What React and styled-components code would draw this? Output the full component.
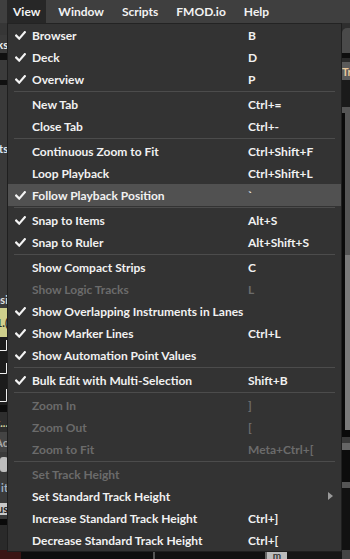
import React from 'react';
import styled, { createGlobalStyle } from 'styled-components';

const GlobalStyle = createGlobalStyle`
  html, body { margin: 0; padding: 0; background: #2a2a2a; }
  body { font-family: "Lato", "Noto Sans", sans-serif; }
`;

const Page = styled.div`
  position: relative;
  width: 350px;
  height: 559px;
  overflow: hidden;
  display: flex;
  flex-direction: column;
  background: #2c2c2c;
`;

const MenuBar = styled.div`
  height: 23px;
  flex: none;
  display: flex;
  padding-left: 7px;
  background: #3f3f3f;
`;

const BarItem = styled.div`
  display: flex;
  align-items: center;
  padding: 0 6px;
  margin-right: 6px;
  font-size: 12px;
  font-weight: 700;
  color: #f2f2f2;
  background: ${(p) => (p.$active ? '#272727' : 'transparent')};
`;

const Body = styled.div`
  flex: 1;
  display: flex;
  min-height: 0;
`;

const Sliver = styled.div`
  width: 8px;
  flex: none;
  display: flex;
  flex-direction: column;
  overflow: hidden;
`;

const Block = styled.div`
  height: ${(p) => p.$h}px;
  flex: none;
  background: ${(p) => p.$bg};
  color: ${(p) => p.$fg || '#eee'};
  display: flex;
  align-items: center;
  justify-content: ${(p) => (p.$right ? 'flex-start' : 'flex-end')};
  overflow: hidden;
  white-space: nowrap;
  font-size: 11px;
  font-weight: 700;
  border-top-left-radius: ${(p) => (p.$round ? '5px' : '0')};
`;

const SplitBlock = styled.div`
  height: ${(p) => p.$h}px;
  flex: none;
  display: grid;
  grid-template-columns: 3px 1fr;
  background: ${(p) => p.$bg};
  &::before {
    content: '';
    background: #0a0a0a;
  }
`;

const Chip = styled.div`
  height: ${(p) => p.$h}px;
  width: 100%;
  background: ${(p) => p.$bg};
  border-radius: ${(p) => p.$r || 0}px;
  color: #222;
  display: flex;
  align-items: center;
  justify-content: flex-end;
  font-size: 11px;
  font-weight: 700;
  overflow: hidden;
`;

const Middle = styled.div`
  flex: 1;
  display: flex;
  flex-direction: column;
`;

const Filler = styled.div`
  flex: 1;
  background: #2c2c2c;
`;

const BottomStrip = styled.div`
  height: 8px;
  display: flex;
  background: #111;
`;

const Seg = styled.div`
  width: ${(p) => p.$w}px;
  flex: none;
  background: ${(p) => p.$bg};
  color: #333;
  font-size: 10px;
  font-weight: 700;
  line-height: 8px;
  overflow: hidden;
  text-align: center;
`;

const Menu = styled.div`
  position: absolute;
  top: 23px;
  left: 7px;
  width: 335px;
  box-sizing: border-box;
  background: #333333;
  border: 1px solid #1f1f1f;
  border-top-color: #232323;
  display: flex;
  flex-direction: column;
`;

const Row = styled.div`
  height: 22px;
  display: grid;
  grid-template-columns: 24px 216px 1fr;
  align-items: center;
  background: ${(p) => (p.$hl ? '#515151' : 'transparent')};
  color: ${(p) => (p.$disabled ? '#6b6b6b' : '#f1f1f1')};
  font-size: 12px;
  font-weight: 700;
  white-space: nowrap;
`;

const CheckCell = styled.div`
  display: flex;
  align-items: center;
  padding-left: 7px;
`;

const Label = styled.div`
  overflow: visible;
`;

const Shortcut = styled.div`
  display: flex;
  align-items: center;
  justify-content: space-between;
  padding-right: 8px;
`;

const Separator = styled.div`
  height: 3px;
  display: flex;
  align-items: center;
  margin: 0 6px;
  &::after {
    content: '';
    flex: 1;
    height: 1px;
    background: #4c4c4c;
  }
`;

const Check = () => (
  <svg width="11" height="9" viewBox="0 0 11 9">
    <path d="M1.2 4.6 L4.2 7.6 L9.8 1.2" fill="none" stroke="#f4f4f4" strokeWidth="2.2" strokeLinecap="square" strokeLinejoin="miter" />
  </svg>
);

const SubArrow = () => (
  <svg width="5" height="8" viewBox="0 0 5 8">
    <path d="M0 0 L5 4 L0 8 Z" fill="#9a9a9a" />
  </svg>
);

const Lanes = () => (
  <svg width="8" height="68" viewBox="0 0 8 68">
    <rect width="8" height="68" fill="#1c1c1c" />
    <path d="M0 13.5 H6.5 V3" stroke="#f0f0f0" strokeWidth="1" fill="none" />
    <path d="M0 36.5 H6.5 V26" stroke="#f0f0f0" strokeWidth="1" fill="none" />
    <path d="M0 64.5 H6.5 V52" stroke="#f0f0f0" strokeWidth="1" fill="none" />
  </svg>
);

const sections = [
  [
    { c: 1, l: 'Browser', k: 'B' },
    { c: 1, l: 'Deck', k: 'D' },
    { c: 1, l: 'Overview', k: 'P' },
  ],
  [
    { l: 'New Tab', k: 'Ctrl+=' },
    { l: 'Close Tab', k: 'Ctrl+-' },
  ],
  [
    { l: 'Continuous Zoom to Fit', k: 'Ctrl+Shift+F' },
    { l: 'Loop Playback', k: 'Ctrl+Shift+L' },
    { c: 1, l: 'Follow Playback Position', k: '`', hl: 1 },
  ],
  [
    { c: 1, l: 'Snap to Items', k: 'Alt+S' },
    { c: 1, l: 'Snap to Ruler', k: 'Alt+Shift+S' },
  ],
  [
    { l: 'Show Compact Strips', k: 'C' },
    { l: 'Show Logic Tracks', k: 'L', d: 1 },
    { c: 1, l: 'Show Overlapping Instruments in Lanes' },
    { c: 1, l: 'Show Marker Lines', k: 'Ctrl+L' },
    { c: 1, l: 'Show Automation Point Values' },
  ],
  [{ c: 1, l: 'Bulk Edit with Multi-Selection', k: 'Shift+B' }],
  [
    { l: 'Zoom In', k: ']', d: 1 },
    { l: 'Zoom Out', k: '[', d: 1 },
    { l: 'Zoom to Fit', k: 'Meta+Ctrl+[', d: 1 },
  ],
  [
    { l: 'Set Track Height', d: 1 },
    { l: 'Set Standard Track Height', sub: 1 },
    { l: 'Increase Standard Track Height', k: 'Ctrl+]' },
    { l: 'Decrease Standard Track Height', k: 'Ctrl+[' },
  ],
];

export default function App() {
  return (
    <>
      <GlobalStyle />
      <Page>
        <MenuBar>
          <BarItem $active>View</BarItem>
          <BarItem>Window</BarItem>
          <BarItem>Scripts</BarItem>
          <BarItem>FMOD.io</BarItem>
          <BarItem>Help</BarItem>
        </MenuBar>
        <Body>
          <Sliver>
            <Block $h={12} $bg="#363636" />
            <Block $h={18} $bg="#3a3a3a">Tracks</Block>
            <Block $h={7} $bg="#101010" />
            <Block $h={20} $bg="#3b3b3b" />
            <Block $h={5} $bg="#101010" />
            <Block $h={53} $bg="#3a3a3a" />
            <Block $h={20} $bg="#3a3a3a" $fg="#dfe8f5">Events</Block>
            <Block $h={132} $bg="#3a3a3a" />
            <Block $h={18} $bg="#3a3a3a" $fg="#e0e0e0">Posi</Block>
            <Block $h={29} $bg="#cfcf8c" $fg="#2a2a2a">1.(</Block>
            <Lanes />
            <Block $h={7} $bg="#0c0c0c" />
            <Block $h={20} $bg="#2e2e2e" $fg="#d8d8a0">t...</Block>
            <Block $h={20} $bg="#444444" $fg="#a8a8a8">Ac</Block>
            <Block $h={24} $bg="#3a3a3a">
              <Chip $h={15} $bg="#bdbdbd" $r={3} />
            </Block>
            <Block $h={22} $bg="#3a3a3a" $fg="#9fb0c0">it</Block>
            <Block $h={21} $bg="#3a3a3a">
              <Chip $h={12} $bg="#c8c8c8">us</Chip>
            </Block>
            <Block $h={6} $bg="#0a0a0a" />
            <Block $h={25} $bg="#2a2a2a" />
            <Block $h={9} $bg="#3a1515" />
          </Sliver>
          <Middle>
            <Filler />
            <BottomStrip>
              <Seg $w={13} $bg="#3a1515" />
              <Seg $w={132} $bg="#0e0e0e" />
              <Seg $w={2} $bg="#555" />
              <Seg $w={110} $bg="#111" />
              <Seg $w={2} $bg="#666" />
              <Seg $w={20} $bg="#bbbbbb">m</Seg>
              <Seg $w={55} $bg="#161616" />
            </BottomStrip>
          </Middle>
          <Sliver>
            <Block $h={5} $bg="#2e2e2e" />
            <Block $h={25} $bg="#4a4a4a" $round />
            <Block $h={5} $bg="#0e0e0e" />
            <Block $h={4} $bg="#2a2a2a" />
            <Block $h={18} $bg="#5a5a5a" $fg="#e8c89a" $right>Tr</Block>
            <Block $h={27} $bg="#1a1a1a" />
            <Block $h={6} $bg="#555555" />
            <SplitBlock $h={142} $bg="#555555" />
            <SplitBlock $h={175} $bg="#7a7a7a" />
            <Block $h={7} $bg="#0a0a0a" />
            <Block $h={6} $bg="#3a3a3a" />
            <Block $h={7} $bg="#666666" />
            <Block $h={32} $bg="#0c0c0c" />
            <Block $h={6} $bg="#555555" />
            <Block $h={62} $bg="#111111" />
            <Block $h={9} $bg="#444444" />
          </Sliver>
        </Body>
        <Menu>
          {sections.map((sec, si) => (
            <React.Fragment key={si}>
              {si > 0 && <Separator />}
              {sec.map((it) => (
                <Row key={it.l} $hl={it.hl} $disabled={it.d}>
                  <CheckCell>{it.c ? <Check /> : null}</CheckCell>
                  <Label>{it.l}</Label>
                  <Shortcut>
                    <span>{it.k || ''}</span>
                    {it.sub ? <SubArrow /> : null}
                  </Shortcut>
                </Row>
              ))}
            </React.Fragment>
          ))}
        </Menu>
      </Page>
    </>
  );
}
